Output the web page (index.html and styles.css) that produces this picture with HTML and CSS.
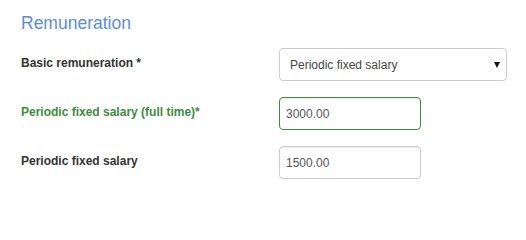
FILE: index.html
```html
<!DOCTYPE html>
<html>
<head>
<meta charset="utf-8">
<link rel="stylesheet" href="styles.css">
</head>
<body>
<div class="panel">
  <h3 class="section-title">Remuneration</h3>
  <form class="form">
    <div class="row">
      <label class="label">Basic remuneration *</label>
      <div class="select-wrap">
        <select class="control select">
          <option>Periodic fixed salary</option>
        </select>
      </div>
    </div>
    <div class="row success">
      <label class="label">Periodic fixed salary (full time)*</label>
      <input class="control input" type="text" value="3000.00">
    </div>
    <div class="row">
      <label class="label">Periodic fixed salary</label>
      <input class="control input" type="text" value="1500.00">
    </div>
  </form>
</div>
</body>
</html>
```

FILE: styles.css
```css
html, body {
  margin: 0;
  padding: 0;
  background: #fff;
}
body {
  font-family: "Liberation Sans", Arial, sans-serif;
  color: #333;
}
.panel {
  padding: 14px 0 0 21px;
}
.section-title {
  margin: 0 0 15px 0;
  font-size: 17.5px;
  font-weight: normal;
  line-height: 1.1;
  color: #5b8dd6;
}
.form {
  display: flex;
  flex-direction: column;
  gap: 16px;
}
.row {
  display: grid;
  grid-template-columns: 258px auto;
  align-items: start;
}
.label {
  font-size: 12px;
  font-weight: bold;
  line-height: 17px;
  padding-top: 7px;
  color: #333;
}
.success .label {
  color: #3f8a3f;
}
.control {
  box-sizing: border-box;
  height: 33px;
  border: 1px solid #ccc;
  border-radius: 4px;
  background: #fff;
  font-family: "Liberation Sans", Arial, sans-serif;
  font-size: 12px;
  color: #555;
  box-shadow: inset 0 1px 1px rgba(0, 0, 0, 0.075);
  margin: 0;
  outline: none;
}
.input {
  width: 142px;
  padding: 0 6px;
}
.success .input {
  border-color: #3f8a3f;
}
.select-wrap {
  position: relative;
  width: 228px;
}
.select {
  width: 228px;
  padding: 0 24px 0 10px;
  appearance: none;
  -webkit-appearance: none;
  box-shadow: none;
  color: #444;
}
.select-wrap::after {
  content: "";
  position: absolute;
  right: 7px;
  top: 14px;
  width: 0;
  height: 0;
  border-left: 3.5px solid transparent;
  border-right: 3.5px solid transparent;
  border-top: 6px solid #111;
  pointer-events: none;
}
```
